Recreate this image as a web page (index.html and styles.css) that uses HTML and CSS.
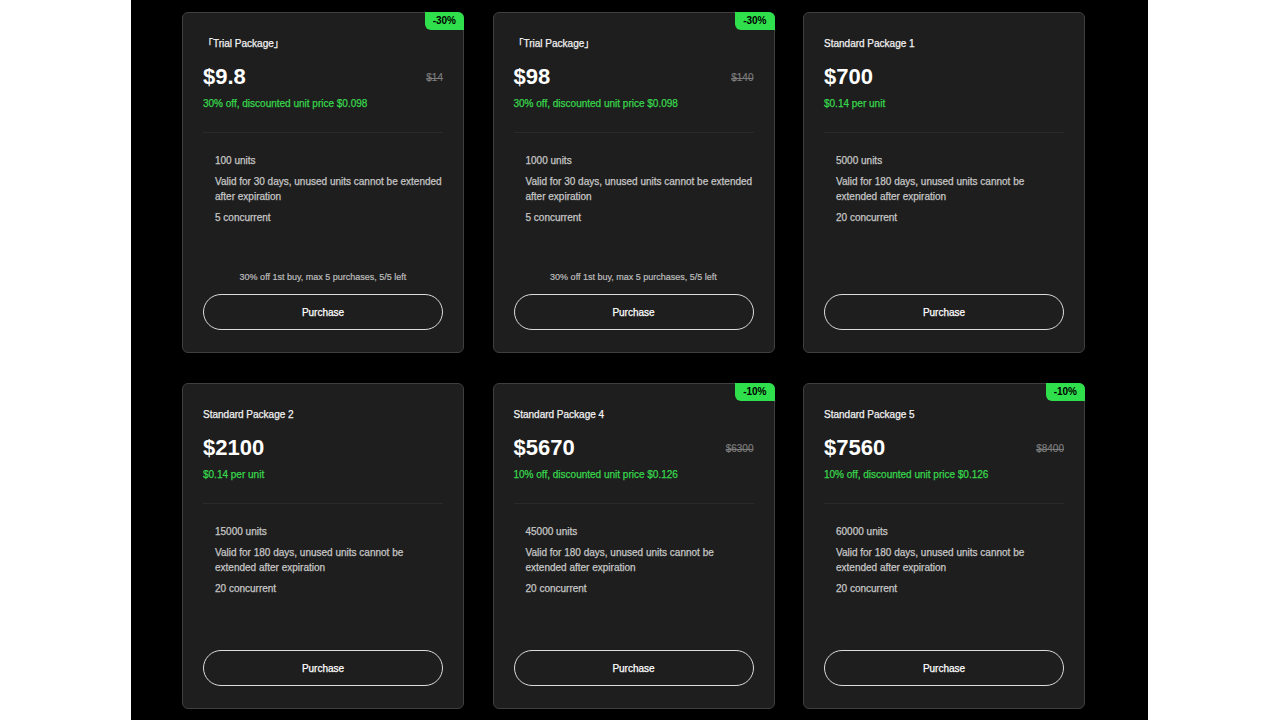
FILE: index.html
```html
<!DOCTYPE html>
<html lang="en">
<head>
<meta charset="utf-8">
<title>Packages</title>
<link rel="stylesheet" href="styles.css">
</head>
<body>
<main class="page">
  <div class="grid">
    <div class="card">
      <span class="badge">-30%</span>
      <div class="title">「Trial Package」</div>
      <div class="price-row"><span class="price">$9.8</span><span class="old">$14</span></div>
      <div class="unit">30% off, discounted unit price $0.098</div>
      <div class="divider"></div>
      <ul class="features">
        <li>100 units</li>
        <li>Valid for 30 days, unused units cannot be extended after expiration</li>
        <li>5 concurrent</li>
      </ul>
      <div class="foot has-note">
        <div class="note">30% off 1st buy, max 5 purchases, 5/5 left</div>
        <button class="buy">Purchase</button>
      </div>
    </div>
    <div class="card">
      <span class="badge">-30%</span>
      <div class="title">「Trial Package」</div>
      <div class="price-row"><span class="price">$98</span><span class="old">$140</span></div>
      <div class="unit">30% off, discounted unit price $0.098</div>
      <div class="divider"></div>
      <ul class="features">
        <li>1000 units</li>
        <li>Valid for 30 days, unused units cannot be extended after expiration</li>
        <li>5 concurrent</li>
      </ul>
      <div class="foot has-note">
        <div class="note">30% off 1st buy, max 5 purchases, 5/5 left</div>
        <button class="buy">Purchase</button>
      </div>
    </div>
    <div class="card">
      <div class="title">Standard Package 1</div>
      <div class="price-row"><span class="price">$700</span></div>
      <div class="unit">$0.14 per unit</div>
      <div class="divider"></div>
      <ul class="features">
        <li>5000 units</li>
        <li>Valid for 180 days, unused units cannot be extended after expiration</li>
        <li>20 concurrent</li>
      </ul>
      <div class="foot">
        <button class="buy">Purchase</button>
      </div>
    </div>
    <div class="card">
      <div class="title">Standard Package 2</div>
      <div class="price-row"><span class="price">$2100</span></div>
      <div class="unit">$0.14 per unit</div>
      <div class="divider"></div>
      <ul class="features">
        <li>15000 units</li>
        <li>Valid for 180 days, unused units cannot be extended after expiration</li>
        <li>20 concurrent</li>
      </ul>
      <div class="foot">
        <button class="buy">Purchase</button>
      </div>
    </div>
    <div class="card">
      <span class="badge">-10%</span>
      <div class="title">Standard Package 4</div>
      <div class="price-row"><span class="price">$5670</span><span class="old">$6300</span></div>
      <div class="unit">10% off, discounted unit price $0.126</div>
      <div class="divider"></div>
      <ul class="features">
        <li>45000 units</li>
        <li>Valid for 180 days, unused units cannot be extended after expiration</li>
        <li>20 concurrent</li>
      </ul>
      <div class="foot">
        <button class="buy">Purchase</button>
      </div>
    </div>
    <div class="card">
      <span class="badge">-10%</span>
      <div class="title">Standard Package 5</div>
      <div class="price-row"><span class="price">$7560</span><span class="old">$8400</span></div>
      <div class="unit">10% off, discounted unit price $0.126</div>
      <div class="divider"></div>
      <ul class="features">
        <li>60000 units</li>
        <li>Valid for 180 days, unused units cannot be extended after expiration</li>
        <li>20 concurrent</li>
      </ul>
      <div class="foot">
        <button class="buy">Purchase</button>
      </div>
    </div>
  </div>
</main>
</body>
</html>
```
FILE: styles.css
```css
html, body {
  margin: 0;
  padding: 0;
  background: #ffffff;
  font-family: "Liberation Sans", Arial, "Noto Sans CJK SC", sans-serif;
}

.page {
  margin-left: 131px;
  width: 1017px;
  min-height: 720px;
  background: #000000;
  box-sizing: border-box;
  padding: 12px 62px 40px 51px;
}

.grid {
  display: grid;
  grid-template-columns: repeat(3, 282px);
  column-gap: 28.5px;
  row-gap: 30px;
}

.card {
  position: relative;
  display: flex;
  flex-direction: column;
  background: #1e1e1e;
  border: 1px solid #3f3f3f;
  border-radius: 6px;
  padding: 24px 20px 22px;
  box-sizing: border-box;
}

.badge {
  position: absolute;
  top: -1px;
  right: -1px;
  background: #2fdf4b;
  color: #000000;
  font-size: 10px;
  font-weight: bold;
  line-height: 18px;
  height: 18px;
  padding: 0 8px;
  border-radius: 0 6px 0 6px;
}

.title {
  color: #f2f2f2;
  font-size: 10px;
  line-height: 14px;
  -webkit-text-stroke: 0.25px #f2f2f2;
}

.price-row {
  margin-top: 13px;
  display: flex;
  align-items: center;
  justify-content: space-between;
  height: 26px;
}

.price {
  color: #ffffff;
  font-size: 22px;
  font-weight: bold;
  line-height: 26px;
}

.old {
  color: #7c7c7c;
  font-size: 10px;
  text-decoration: line-through;
  -webkit-text-stroke: 0.2px #7c7c7c;
}

.unit {
  margin-top: 7px;
  color: #38d64c;
  font-size: 10px;
  line-height: 14px;
  -webkit-text-stroke: 0.25px #38d64c;
}

.divider {
  margin: 21px 0 20px;
  height: 1px;
  background: #2a2a2a;
}

.features {
  list-style: none;
  margin: 0;
  padding: 0 0 0 12px;
  display: flex;
  flex-direction: column;
  gap: 6px;
}

.features li {
  color: #c6c6c6;
  font-size: 10px;
  line-height: 15px;
  -webkit-text-stroke: 0.25px #c6c6c6;
}

.foot {
  margin-top: auto;
  padding-top: 54px;
  display: flex;
  flex-direction: column;
}

.foot.has-note {
  padding-top: 46px;
}

.note {
  color: #bdbdbd;
  font-size: 9px;
  line-height: 13px;
  text-align: center;
  margin-bottom: 10px;
  -webkit-text-stroke: 0.2px #bdbdbd;
}

.buy {
  height: 36px;
  width: 100%;
  background: transparent;
  border: 1px solid #dcdcdc;
  border-radius: 18px;
  color: #ffffff;
  font-family: "Liberation Sans", Arial, sans-serif;
  font-size: 10px;
  -webkit-text-stroke: 0.25px #ffffff;
  cursor: pointer;
}
```
